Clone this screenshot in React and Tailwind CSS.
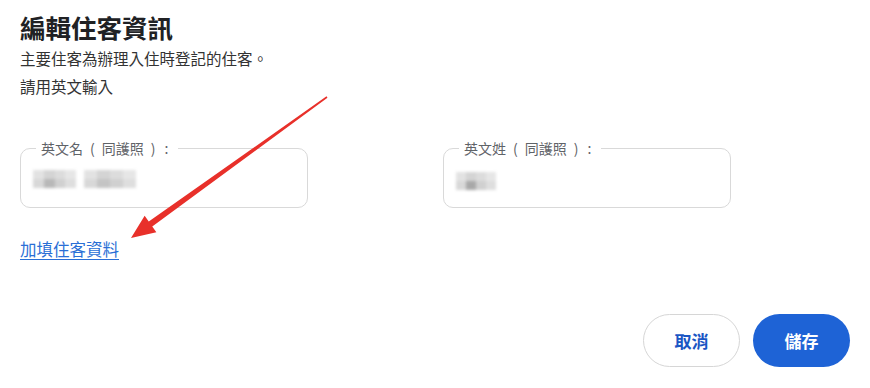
import React from "react";

function Field({ name, children }) {
  return (
    <div className="relative w-[288px] h-[60px] rounded-[10px] border border-[#d9d9d9]">
      <span className="absolute left-[15px] top-[-11px] flex bg-white pl-[5px] pr-[10px] text-[14px] leading-[20px] text-[#5f6368]">
        <span>{name}</span>
        <span className="mx-[7px]">(</span>
        <span>同護照</span>
        <span className="mx-[7px]">)</span>
        <span className="ml-[2px]">:</span>
      </span>
      <div className="flex h-full items-center pl-[12px] pt-[2px]">{children}</div>
    </div>
  );
}

function Blur({ w, shade = "#c8c8c8" }) {
  return (
    <div className="h-[18px] blur-[1.5px]" style={{ width: w }}>
      <div className="grid h-full grid-cols-4 grid-rows-2">
        <div className="bg-[#e2e2e2]" />
        <div className="bg-[#d4d4d4]" />
        <div className="bg-[#dcdcdc]" />
        <div className="bg-[#e6e6e6]" />
        <div className="bg-[#d8d8d8]" />
        <div style={{ background: shade }} />
        <div className="bg-[#d0d0d0]" />
        <div className="bg-[#dedede]" />
      </div>
    </div>
  );
}

export default function App() {
  return (
    <div
      className="relative w-[870px] h-[388px] bg-white text-[#202124] overflow-hidden"
      style={{ fontFamily: '"Noto Sans CJK TC", "Noto Sans", sans-serif' }}
    >
      <div className="px-[20px] pt-[9px]">
        <h1 className="text-[25.5px] leading-[36px] font-bold">編輯住客資訊</h1>
        <p className="mt-[1px] text-[15.5px] leading-[24px] text-[#333] [text-spacing-trim:space-all]">主要住客為辦理入住時登記的住客。</p>
        <p className="mt-[4px] text-[15.5px] leading-[24px] text-[#333]">請用英文輸入</p>

        <div className="mt-[50px] grid grid-cols-2 gap-[16px]">
          <Field name="英文名">
            <div className="flex gap-[8px]">
              <Blur w={43} shade="#b8b8b8" />
              <Blur w={52} shade="#c4c4c4" />
            </div>
          </Field>
          <Field name="英文姓">
            <div className="mt-[4px]">
              <Blur w={40} shade="#a8a8a8" />
            </div>
          </Field>
        </div>

        <div className="mt-[29px]">
          <a className="text-[16.5px] leading-[22px] text-[#2a6fd6] underline underline-offset-[3px] cursor-pointer">
            加填住客資料
          </a>
        </div>

        <div className="mt-[53px] flex justify-end gap-[13px]">
          <button className="h-[53px] w-[97px] rounded-full border border-[#d6d6d6] bg-white text-[17px] font-bold text-[#1a56c4]">
            取消
          </button>
          <button className="h-[53px] w-[97px] rounded-full bg-[#1e63d6] text-[17px] font-bold text-white">
            儲存
          </button>
        </div>
      </div>

      <svg className="absolute left-0 top-0" width="870" height="388" viewBox="0 0 870 388">
        <polygon
          points="327.47,97.65 326.53,96.35 148.75,221.56 144.65,215.87 131,238 156.35,232.13 152.26,226.44"
          fill="#e8302a"
        />
      </svg>
    </div>
  );
}
